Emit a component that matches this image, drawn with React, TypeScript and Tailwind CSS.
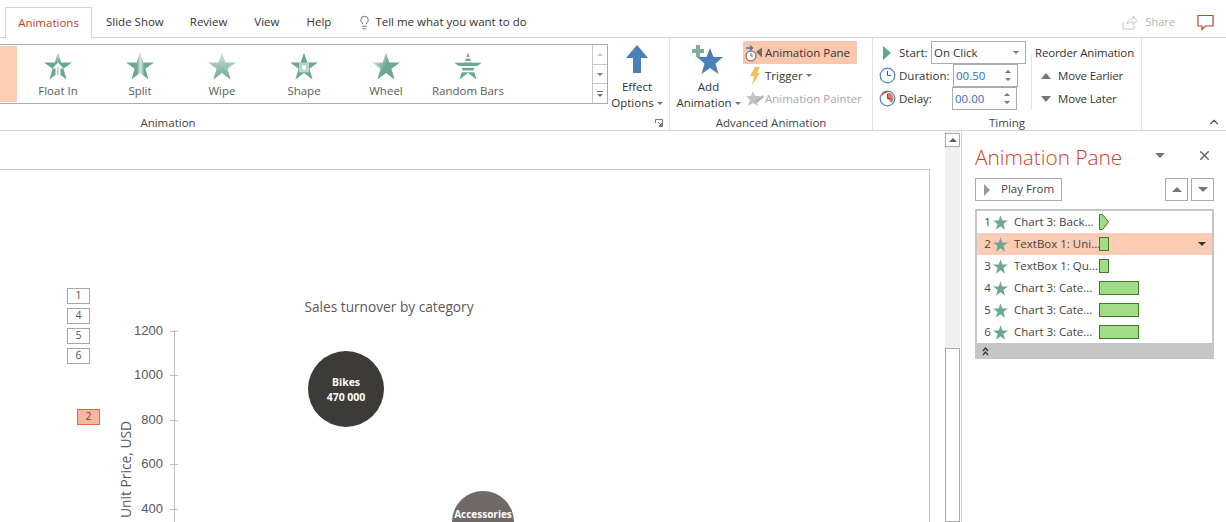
import { ChevronUp, Lightbulb, X } from "lucide-react";

const FONT = "font-['Open_Sans','Noto_Sans',sans-serif]";
const STAR = "14,0.5 17.3,10.4 28,10.4 19.4,16.8 22.6,27.5 14,21 5.4,27.5 8.6,16.8 0,10.4 10.7,10.4";
const TEAL = "#6ba792";

const GALLERY = [
  { id: "float", label: "Float In" },
  { id: "split", label: "Split" },
  { id: "wipe", label: "Wipe" },
  { id: "shape", label: "Shape" },
  { id: "wheel", label: "Wheel" },
  { id: "bars", label: "Random Bars" },
];

const ROWS = [
  { n: 1, text: "Chart 3: Back...", bar: "play" },
  { n: 2, text: "TextBox 1: Uni...", bar: "short", active: true },
  { n: 3, text: "TextBox 1: Qu...", bar: "short" },
  { n: 4, text: "Chart 3: Cate...", bar: "long" },
  { n: 5, text: "Chart 3: Cate...", bar: "long" },
  { n: 6, text: "Chart 3: Cate...", bar: "long" },
];

const TICKS = [
  { v: "1200", y: 331 },
  { v: "1000", y: 375 },
  { v: "800", y: 420 },
  { v: "600", y: 464 },
  { v: "400", y: 509 },
];

const TAGS = [
  { n: 1, y: 288 },
  { n: 4, y: 308 },
  { n: 5, y: 328 },
  { n: 6, y: 348 },
];

function Caret({ className = "" }: { className?: string }) {
  return <span className={`inline-block h-0 w-0 border-x-[3px] border-t-[3px] border-x-transparent border-t-[#767676] ${className}`} />;
}

function GalleryStar({ kind }: { kind: string }) {
  const fill =
    kind === "split" ? "url(#g-split)" : kind === "wipe" ? "url(#g-wipe)" : kind === "wheel" ? "url(#g-wheel)" : kind === "float" ? "url(#g-float)" : TEAL;
  return (
    <svg width="28" height="28" viewBox="0 0 28 28">
      <defs>
        <linearGradient id="g-split" x1="0" x2="1" y1="0" y2="0">
          <stop offset="0.38" stopColor={TEAL} />
          <stop offset="0.52" stopColor="#d5e6df" />
          <stop offset="0.66" stopColor={TEAL} />
        </linearGradient>
        <linearGradient id="g-wipe" x1="0" x2="0" y1="0" y2="1">
          <stop offset="0" stopColor="#cfe2db" />
          <stop offset="1" stopColor={TEAL} />
        </linearGradient>
        <linearGradient id="g-float" x1="0" x2="0" y1="0" y2="1">
          <stop offset="0" stopColor="#c4dcd3" />
          <stop offset="0.4" stopColor={TEAL} />
        </linearGradient>
        <linearGradient id="g-wheel" x1="0" x2="1" y1="0" y2="0.7">
          <stop offset="0.15" stopColor="#e4efeb" />
          <stop offset="0.55" stopColor={TEAL} />
        </linearGradient>
      </defs>
      <polygon points={STAR} fill={fill} />
      {kind === "float" && (
        <>
          <path d="M14 10.500l5.500 6h-3V23h-5v-6.500h-3z" fill="#fff" />
          <path d="M14 15v8" stroke={TEAL} strokeWidth="0.800" />
        </>
      )}
      {kind === "shape" && (
        <>
          <rect x="9" y="10.500" width="10" height="10" fill="#b9d5cb" />
          <rect x="12" y="13.500" width="4" height="4" fill="#fff" />
        </>
      )}
      {kind === "bars" && (
        <>
          <rect x="0" y="5" width="28" height="1.600" fill="#fff" />
          <rect x="0" y="9" width="28" height="1.400" fill="#fff" />
          <rect x="0" y="14" width="28" height="1.800" fill="#fff" />
          <rect x="0" y="18.500" width="28" height="1.800" fill="#fff" />
        </>
      )}
    </svg>
  );
}

function TimingRow({ label, children, icon }: { label: string; children: React.ReactNode; icon: React.ReactNode }) {
  return (
    <div className="flex h-[23px] items-center">
      <span className="flex w-[26px] justify-center pl-[2px]">{icon}</span>
      <span className="w-[54px]">{label}</span>
      {children}
    </div>
  );
}

function Spinner({ value, className = "" }: { value: string; className?: string }) {
  return (
    <div className={`flex h-[23px] w-[65px] items-center justify-between border border-[#ababab] bg-white pl-[2px] pr-[6px] text-[#2a6fb5] ${className}`}>
      <span>{value}</span>
      <span className="flex flex-col gap-[5px]">
        <span className="h-0 w-0 border-x-[3px] border-b-[3px] border-x-transparent border-b-[#777]" />
        <span className="h-0 w-0 border-x-[3px] border-t-[3px] border-x-transparent border-t-[#777]" />
      </span>
    </div>
  );
}

function ClockIcon({ delay }: { delay?: boolean }) {
  return (
    <svg width="17" height="17" viewBox="0 0 17 17">
      <circle cx="8.500" cy="8.500" r="7.300" fill="#fff" stroke="#4f86c0" strokeWidth="1.200" />
      {delay && <path d="M8.500 2.500a6 6 0 0 1 6 6 6 6 0 0 1-2 4.500L8.500 8.500z" fill="#dd7a5e" />}
      {delay && <path d="M3 5a7 7 0 0 1 5.500-3.200" fill="none" stroke="#d24726" strokeWidth="1.200" />}
      <path d="M8.500 4v4.500H12" fill="none" stroke="#555" strokeWidth="1" />
    </svg>
  );
}

export default function App() {
  return (
    <div className={`flex h-[522px] w-[1226px] flex-col overflow-hidden bg-white text-[11.5px] text-[#444] ${FONT}`}>
      {/* tabs */}
      <div className="flex h-[38px] flex-shrink-0 items-end border-b border-[#d4d4d4]">
        <div className="relative -mb-px ml-[5px] flex h-[31px] w-[87px] items-center justify-center border border-b-0 border-[#d4d4d4] bg-white text-[#c43e1c]">
          Animations
        </div>
        <div className="flex h-[30px] items-center text-[#333]">
          <span className="ml-[14px]">Slide Show</span>
          <span className="ml-[26px]">Review</span>
          <span className="ml-[27px]">View</span>
          <span className="ml-[27px]">Help</span>
          <Lightbulb size={15} strokeWidth={1.2} className="ml-[26px] text-[#444]" />
          <span className="ml-[3px]">Tell me what you want to do</span>
        </div>
        <div className="ml-auto flex h-[30px] items-center pr-[12px] text-[#b3b3b3]">
          <svg width="16" height="16" viewBox="0 0 16 16" fill="none" stroke="#c4c4c4" strokeWidth="1">
            <path d="M1 8v7h11v-3M5 10c1-4 4-5 6-5V2l4 4.500L11 11V8C8 8 6 9 5 10z" />
          </svg>
          <span className="ml-[7px] text-[11px]">Share</span>
          <svg className="ml-[22px]" width="17" height="17" viewBox="0 0 17 17" fill="none" stroke="#b7472a" strokeWidth="1.200">
            <path d="M1 1.500h15v10.500H8.500L5 15.500V12H1z" />
          </svg>
        </div>
      </div>

      {/* ribbon */}
      <div className="flex h-[93px] flex-shrink-0 border-b border-[#d4d4d4]">
        {/* animation group */}
        <div className="relative flex w-[670px] flex-col border-r border-[#e1e1e1]">
          <div className="flex h-[82px] items-start pt-[6px]">
            <div className="flex h-[60px] w-[608px] border-y border-r border-[#ababab]">
              <div className="my-[1px] w-[17px] bg-[#fdcdb6]" />
              {GALLERY.map((g) => (
                <div key={g.id} className="flex w-[82px] flex-col items-center pt-[7px] text-[#5c5c5c]">
                  <GalleryStar kind={g.id} />
                  <span className="mt-[2px] whitespace-nowrap">{g.label}</span>
                </div>
              ))}
              <div className="ml-auto flex w-[15px] flex-col border-l border-[#c8c8c8]">
                <div className="flex h-[20px] items-center justify-center border-b border-[#c8c8c8]">
                  <span className="h-0 w-0 border-x-[3px] border-b-[3px] border-x-transparent border-b-[#c8c8c8]" />
                </div>
                <div className="flex h-[19px] items-center justify-center border-b border-[#c8c8c8]">
                  <Caret />
                </div>
                <div className="flex flex-1 flex-col items-center justify-center gap-[2px]">
                  <span className="h-px w-[6px] bg-[#767676]" />
                  <Caret />
                </div>
              </div>
            </div>
            <div className="ml-[4px] flex w-[50px] flex-col items-center text-[#333]">
              <svg className="mt-[1px]" width="22" height="28" viewBox="0 0 22 28">
                <path d="M11 0l11 13h-7v15H7V13H0z" fill="#4a7fb8" />
              </svg>
              <span className="mt-[6px] leading-[16px]">Effect</span>
              <span className="flex items-center gap-[3px] leading-[16px]">
                Options
                <Caret />
              </span>
            </div>
          </div>
          <div className="w-[336px] text-center leading-[14px] text-[#444]">Animation</div>
          <svg className="absolute bottom-[3px] right-[6px]" width="8" height="8" viewBox="0 0 8 8" fill="none" stroke="#777" strokeWidth="1">
            <path d="M0.500 4V0.500H7.500V7.500H4M3 3l3.500 3.500M6.500 4v2.500H4" />
          </svg>
        </div>

        {/* advanced animation */}
        <div className="flex w-[203px] flex-col border-r border-[#e1e1e1]">
          <div className="flex h-[82px] pt-[3px]">
            <div className="flex w-[73px] flex-col items-center pl-[4px] text-[#333]">
              <svg className="-ml-[4px] mt-[4px]" width="32" height="30" viewBox="0 0 32 30">
                <polygon points="19,3 22.500,12 32,12 24.500,18.500 27.500,29 19,23 10.500,29 13.500,18.500 6,12 15.500,12" fill="#4a7fb8" />
                <path d="M5 0h4v4h4v4H9v4H5V8H1V4h4z" fill="#7fb09f" />
              </svg>
              <span className="mt-[4px] leading-[16px]">Add</span>
              <span className="flex items-center gap-[3px] leading-[16px]">
                Animation
                <Caret />
              </span>
            </div>
            <div className="flex flex-col">
              <div className="flex h-[23px] w-[114px] items-center bg-[#fdc7ae] pl-[2px] text-[#333]">
                <svg width="18" height="20" viewBox="0 0 18 20" fill="none">
                  <path d="M1 5h6M5 2.500L7.500 5 5 7.500" stroke="#3a78b8" strokeWidth="1.300" />
                  <circle cx="6" cy="13" r="5" fill="#fff" stroke="#555" strokeWidth="1" />
                  <path d="M6 10v3h2.500" stroke="#555" strokeWidth="0.800" />
                  <path d="M11 9l6-4.500v10z" fill="#6e6e6e" />
                </svg>
                <span className="ml-[2px]">Animation Pane</span>
              </div>
              <div className="flex h-[23px] items-center pl-[7px] text-[#333]">
                <svg width="10" height="18" viewBox="0 0 10 18">
                  <path d="M5 0h5L7 6h3L2 18l2-9H0z" fill="#efc05a" />
                </svg>
                <span className="ml-[5px]">Trigger</span>
                <Caret className="ml-[3px]" />
              </div>
              <div className="flex h-[23px] items-center pl-[3px] text-[#a8a8a8]">
                <svg width="18" height="16" viewBox="0 0 18 16">
                  <polygon points="7,0 9,5 14,5 10,9 12,15 7,12 2,15 4,9 0,5 5,5" fill="#c2c2c2" />
                  <path d="M9 9l8-5 1 2-7 6z" fill="#b0b0b0" />
                </svg>
                <span className="ml-[1px] whitespace-nowrap">Animation Painter</span>
              </div>
            </div>
          </div>
          <div className="text-center leading-[14px] text-[#444]">Advanced Animation</div>
        </div>

        {/* timing */}
        <div className="flex w-[269px] flex-col border-r border-[#e1e1e1]">
          <div className="flex h-[82px] pt-[3px] text-[#333]">
            <div className="flex w-[156px] flex-col">
              <TimingRow label="Start:" icon={<span className="h-0 w-0 border-y-[7px] border-l-[8px] border-y-transparent border-l-[#5fa68c]" />}>
                <div className="-ml-[22px] flex h-[23px] w-[95px] items-center justify-between border border-[#ababab] pl-[2px] pr-[6px]">
                  On Click
                  <Caret />
                </div>
              </TimingRow>
              <TimingRow label="Duration:" icon={<ClockIcon />}>
                <Spinner value="00.50" />
              </TimingRow>
              <TimingRow label="Delay:" icon={<ClockIcon delay />}>
                <Spinner value="00.00" className="-ml-[1px]" />
              </TimingRow>
            </div>
            <div className="mb-[6px] mt-[14px] ml-[2px] w-px bg-[#e1e1e1]" />
            <div className="ml-[3px] flex flex-col whitespace-nowrap tracking-[-0.15px]">
              <div className="flex h-[23px] items-center">Reorder Animation</div>
              <div className="flex h-[23px] items-center">
                <span className="ml-[6px] h-0 w-0 border-x-[5px] border-b-[6px] border-x-transparent border-b-[#767676]" />
                <span className="ml-[7px]">Move Earlier</span>
              </div>
              <div className="flex h-[23px] items-center">
                <span className="ml-[6px] h-0 w-0 border-x-[5px] border-t-[6px] border-x-transparent border-t-[#767676]" />
                <span className="ml-[7px]">Move Later</span>
              </div>
            </div>
          </div>
          <div className="text-center leading-[14px] text-[#444]">Timing</div>
        </div>

        <div className="flex flex-1 items-end justify-end pb-[1px] pr-[5px]">
          <ChevronUp size={14} strokeWidth={2} className="text-[#555]" />
        </div>
      </div>

      {/* workspace */}
      <div className="flex min-h-0 flex-1">
        <div className="relative w-[945px] overflow-hidden">
          <div className="absolute -left-[2px] top-[38px] h-[500px] w-[932px] border border-[#c8c8c8]" />
          <div className="absolute left-[204px] top-[166px] w-[370px] text-center text-[13.7px] text-[#595959]">Sales turnover by category</div>

          {TAGS.map((t) => (
            <div
              key={t.n}
              style={{ top: t.y - 131 }}
              className="absolute left-[67px] flex h-[16px] w-[23px] items-center justify-center border border-[#a8a8a8] text-[10.5px] text-[#555]"
            >
              {t.n}
            </div>
          ))}
          <div className="absolute left-[77px] top-[278px] flex h-[16px] w-[23px] items-center justify-center border border-[#e8653f] bg-[#f4b69c] text-[10.5px] text-[#555]">2</div>

          <div className="absolute left-[174px] top-[199px] h-[200px] w-px bg-[#bfbfbf]" />
          {TICKS.map((t) => (
            <div key={t.v} style={{ top: t.y - 131 }} className="absolute left-[170px] h-px w-[8px] bg-[#bfbfbf]" />
          ))}
          {TICKS.map((t) => (
            <div
              key={t.v}
              style={{ top: t.y - 131 - 9 }}
              className="absolute left-[113px] w-[50px] text-right font-['Liberation_Sans',sans-serif] text-[13px] leading-[18px] text-[#595959]"
            >
              {t.v}
            </div>
          ))}
          <div className="absolute left-[117px] top-[290px] origin-top-left translate-y-[97px] -rotate-90 whitespace-nowrap text-[13.8px] leading-[18px] text-[#595959]">
            Unit Price, USD
          </div>

          <div className="absolute left-[308px] top-[220px] flex h-[76px] w-[76px] flex-col items-center justify-center rounded-full bg-[#3d3b38] pt-[2px] text-[10.5px] font-bold leading-[15px] text-white">
            <span>Bikes</span>
            <span>470 000</span>
          </div>
          <div className="absolute left-[452px] top-[360px] flex h-[62px] w-[62px] justify-center rounded-full bg-[#6f6a67] pt-[16px] text-[10px] font-bold leading-[15px] text-white">
            Accessories
          </div>
        </div>

        {/* slide scrollbar */}
        <div className="flex w-[15px] flex-col bg-[#f0f0f0]">
          <div className="mt-[2px] flex h-[14px] items-center justify-center border border-[#ababab] bg-white">
            <span className="h-0 w-0 border-x-[4px] border-b-[4px] border-x-transparent border-b-[#606060]" />
          </div>
          <div className="mt-[201px] flex-1 border border-[#ababab] bg-white" />
        </div>

        {/* pane */}
        <div className="ml-[1px] flex-1 border-l border-[#d4d4d4] pl-[13px] pr-[12px] pt-[13px]">
          <div className="flex h-[28px] items-center">
            <span className="text-[20.800px] font-light text-[#d9401a]">Animation Pane</span>
            <span className="ml-auto mb-[6px] h-0 w-0 border-x-[5px] border-t-[5px] border-x-transparent border-t-[#767676]" />
            <X size={15} strokeWidth={2.5} className="mb-[6px] ml-[32px] mr-[2px] text-[#6d6d6d]" />
          </div>
          <div className="mt-[6px] flex">
            <div className="flex h-[23px] w-[87px] items-center border border-[#ababab] pb-[2px] pl-[8px] text-[#444]">
              <span className="mt-[2px] h-0 w-0 border-y-[6px] border-l-[6px] border-y-transparent border-l-[#9a9a9a]" />
              <span className="ml-[11px]">Play From</span>
            </div>
            <div className="ml-auto flex h-[23px] w-[23px] items-center justify-center border border-[#ababab]">
              <span className="h-0 w-0 border-x-[5px] border-b-[5px] border-x-transparent border-b-[#767676]" />
            </div>
            <div className="ml-[3px] flex h-[23px] w-[23px] items-center justify-center border border-[#ababab]">
              <span className="h-0 w-0 border-x-[5px] border-t-[5px] border-x-transparent border-t-[#767676]" />
            </div>
          </div>
          <div className="mt-[8px] border-2 border-b-0 border-[#c6c6c6]">
            {ROWS.map((r) => (
              <div key={r.n} className={`flex h-[22px] items-center pl-[6px] ${r.active ? "bg-[#fcccb4]" : ""}`}>
                <span className="w-[9px] text-center">{r.n}</span>
                <svg className="ml-[1px] mt-[1px]" width="15" height="15" viewBox="0 0 28 28">
                  <polygon points={STAR} fill={TEAL} />
                </svg>
                <span className="ml-[6px] w-[85px] whitespace-nowrap">{r.text}</span>
                {r.bar === "play" && (
                  <svg width="10" height="16" viewBox="0 0 10 16">
                    <path d="M0.500 0.500h3L9.500 8l-6 7.500h-3z" fill="#a0db85" stroke="#3f7a28" />
                  </svg>
                )}
                {r.bar === "short" && <span className="h-[14px] w-[10px] border border-[#3f7a28] bg-[#a0db85]" />}
                {r.bar === "long" && <span className="h-[14px] w-[40px] border border-[#3f7a28] bg-[#a0db85]" />}
                {r.active && <span className="ml-auto mr-[6px] h-0 w-0 border-x-[4px] border-t-[4px] border-x-transparent border-t-[#333]" />}
              </div>
            ))}
          </div>
          <div className="flex h-[16px] items-center bg-[#c6c6c6] pl-[7px]">
            <svg width="7" height="9" viewBox="0 0 7 9" fill="none" stroke="#333" strokeWidth="1.200">
              <path d="M1 4l2.500-3L6 4M1 8l2.500-3L6 8" />
            </svg>
          </div>
        </div>
      </div>
    </div>
  );
}
